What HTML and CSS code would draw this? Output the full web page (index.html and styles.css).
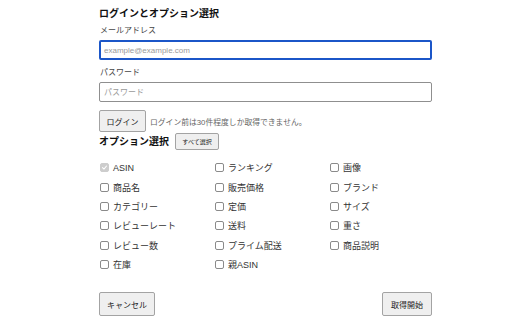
FILE: index.html
```html
<!DOCTYPE html>
<html lang="ja">
<head>
<meta charset="utf-8">
<title>ログインとオプション選択</title>
<link rel="stylesheet" href="styles.css">
</head>
<body>
<div class="panel">
  <h1 class="title">ログインとオプション選択</h1>
  <div class="field">
    <label class="label" for="email">メールアドレス</label>
    <input id="email" class="input focused" type="text" placeholder="example@example.com">
  </div>
  <div class="field">
    <label class="label" for="pass">パスワード</label>
    <input id="pass" class="input" type="password" placeholder="パスワード">
  </div>
  <div class="login-row">
    <button class="btn btn-login">ログイン</button>
    <span class="note">ログイン前は30件程度しか取得できません。</span>
  </div>
  <div class="opt-head">
    <h2 class="subtitle">オプション選択</h2>
    <button class="btn btn-small">すべて選択</button>
  </div>
  <div class="grid">
    <label class="opt"><span class="box checked"><svg viewBox="0 0 10 10" width="9" height="9"><path d="M2.2 5.2 L4.2 7.2 L7.9 2.9" fill="none" stroke="#fff" stroke-width="1.5" stroke-linecap="round" stroke-linejoin="round"/></svg></span>ASIN</label>
    <label class="opt"><span class="box"></span>ランキング</label>
    <label class="opt"><span class="box"></span>画像</label>
    <label class="opt"><span class="box"></span>商品名</label>
    <label class="opt"><span class="box"></span>販売価格</label>
    <label class="opt"><span class="box"></span>ブランド</label>
    <label class="opt"><span class="box"></span>カテゴリー</label>
    <label class="opt"><span class="box"></span>定価</label>
    <label class="opt"><span class="box"></span>サイズ</label>
    <label class="opt"><span class="box"></span>レビューレート</label>
    <label class="opt"><span class="box"></span>送料</label>
    <label class="opt"><span class="box"></span>重さ</label>
    <label class="opt"><span class="box"></span>レビュー数</label>
    <label class="opt"><span class="box"></span>プライム配送</label>
    <label class="opt"><span class="box"></span>商品説明</label>
    <label class="opt"><span class="box"></span>在庫</label>
    <label class="opt"><span class="box"></span>親ASIN</label>
  </div>
  <div class="actions">
    <button class="btn btn-action btn-cancel">キャンセル</button>
    <button class="btn btn-action btn-start">取得開始</button>
  </div>
</div>
</body>
</html>
```

FILE: styles.css
```css
* { box-sizing: border-box; }

html, body {
  margin: 0;
  padding: 0;
  background: #fff;
}

body {
  font-family: "Liberation Sans", "Noto Sans CJK JP", sans-serif;
  color: #222;
}

.panel {
  width: 333px;
  margin-left: 99px;
  padding-top: 8px;
  display: flex;
  flex-direction: column;
}

.title {
  margin: 0;
  font-size: 10px;
  line-height: 12px;
  font-weight: bold;
  color: #111;
}

.field {
  margin-top: 6px;
  display: flex;
  flex-direction: column;
}

.field + .field {
  margin-top: 8px;
}

.label {
  font-size: 8px;
  line-height: 10px;
  color: #444;
  margin-bottom: 4px;
  padding-left: 1px;
}

.input {
  width: 100%;
  height: 20px;
  border: 1px solid #8f8f8f;
  border-radius: 2px;
  padding: 0 4px;
  font-family: "Liberation Sans", "Noto Sans CJK JP", sans-serif;
  font-size: 8px;
  color: #222;
  background: #fff;
  outline: none;
}

.input::placeholder {
  color: #9a9a9a;
}

.input.focused {
  border: 2px solid #1b56c8;
  padding: 0 3px;
}

.login-row {
  margin-top: 8px;
  display: flex;
  align-items: center;
}

.btn {
  font-family: "Liberation Sans", "Noto Sans CJK JP", sans-serif;
  background: #efefef;
  border: 1px solid #a3a3a3;
  border-radius: 2px;
  color: #222;
  padding: 0;
  display: inline-flex;
  align-items: center;
  justify-content: center;
}

.btn-login {
  width: 47px;
  height: 22px;
  font-size: 8px;
}

.note {
  margin-left: 4px;
  font-size: 7.8px;
  color: #666;
  white-space: nowrap;
}

.opt-head {
  margin-top: 1px;
  display: flex;
  align-items: center;
  height: 17px;
}

.subtitle {
  margin: 0;
  font-size: 10px;
  line-height: 17px;
  font-weight: bold;
  color: #111;
}

.btn-small {
  margin-left: 6px;
  width: 44px;
  height: 17px;
  font-size: 6px;
}

.grid {
  margin-top: 8px;
  display: grid;
  grid-template-columns: 115px 115px 103px;
  grid-auto-rows: 19.4px;
}

.opt {
  display: flex;
  align-items: center;
  font-size: 9px;
  color: #333;
  padding-left: 1px;
  white-space: nowrap;
}

.box {
  width: 9px;
  height: 9px;
  border: 1px solid #8a8a8a;
  border-radius: 2px;
  background: #fff;
  margin-right: 4px;
  flex: none;
  display: inline-flex;
  align-items: center;
  justify-content: center;
}

.box.checked {
  background: #cdcdcd;
  border-color: #cdcdcd;
}

.box svg {
  display: block;
}

.actions {
  margin-top: 18px;
  display: flex;
  justify-content: space-between;
}

.btn-action {
  height: 24px;
  font-size: 8px;
}

.btn-cancel {
  width: 56px;
}

.btn-start {
  width: 50px;
}
```
